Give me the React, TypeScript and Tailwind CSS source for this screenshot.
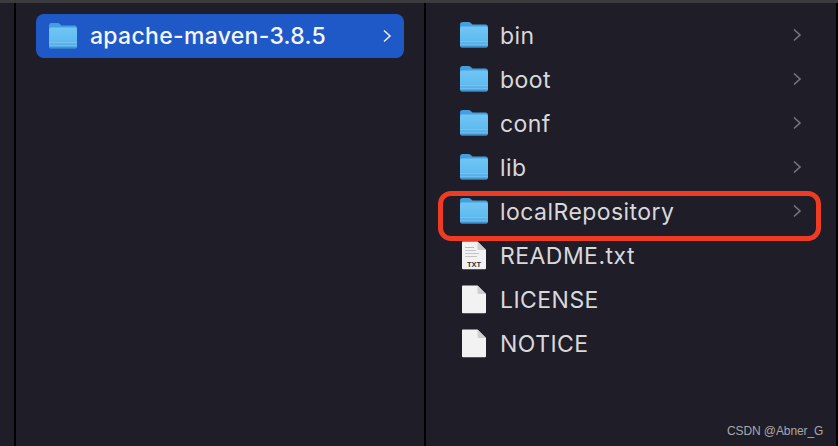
import React from 'react';

const Folder = ({ id }: { id: string }) => (
  <svg width="30" height="28" viewBox="0 0 30 28" className="shrink-0">
    <defs>
      <linearGradient id={id} x1="0" y1="0" x2="0" y2="1">
        <stop offset="0" stopColor="#70c6f5" />
        <stop offset="0.6" stopColor="#62bcf0" />
        <stop offset="1" stopColor="#4fa5e0" />
      </linearGradient>
    </defs>
    <path d="M1 3.500C1 2 2 1 3.500 1h6c1 0 1.600.4 2.300 1l1.700 1.600h13c1.400 0 2.500 1 2.500 2.500v4H1z" fill="#459fdf" />
    <rect x="1" y="5.500" width="28" height="21" rx="2" fill={`url(#${id})`} />
    <rect x="1" y="20" width="28" height="1" fill="#8accf2" opacity="0.6" />
    <rect x="1" y="23" width="28" height="1" fill="#8accf2" opacity="0.5" />
    <rect x="2" y="25.500" width="26" height="1" fill="#2f7fbd" />
  </svg>
);

const FileIcon = ({ txt }: { txt?: boolean }) => (
  <svg width="26" height="29" viewBox="0 0 26 29" className="shrink-0">
    <path d="M1 1.500C1 .9 1.400.5 2 .5h14.500L25 9v18c0 .8-.5 1.300-1.300 1.300H2.300C1.500 28.300 1 27.800 1 27z" fill="#f2f2f2" />
    <path d="M16.500.5V7.500c0 .9.6 1.500 1.500 1.500h7z" fill="#cfcfcf" />
    {txt && (
      <>
        <rect x="4" y="6" width="9" height="1" fill="#bbbbbb" />
        <rect x="4" y="9" width="11" height="1" fill="#c4c4c4" />
        <rect x="4" y="12" width="14" height="1" fill="#c4c4c4" />
        <rect x="4" y="15" width="12" height="1" fill="#c4c4c4" />
        <text x="13" y="26" textAnchor="middle" fontSize="7.500" fontWeight="700" fill="#333333" fontFamily="Liberation Sans, sans-serif">TXT</text>
      </>
    )}
  </svg>
);

const Chevron = ({ color }: { color: string }) => (
  <svg width="10" height="14" viewBox="0 0 10 14" fill="none" stroke={color} strokeWidth="1.600" className="shrink-0">
    <path d="M2 1.500 8 7l-6 5.500" />
  </svg>
);

const rows = [
  { name: 'bin', kind: 'folder' },
  { name: 'boot', kind: 'folder' },
  { name: 'conf', kind: 'folder' },
  { name: 'lib', kind: 'folder' },
  { name: 'localRepository', kind: 'folder' },
  { name: 'README.txt', kind: 'txt' },
  { name: 'LICENSE', kind: 'file' },
  { name: 'NOTICE', kind: 'file' },
];

export default function App() {
  return (
    <div className="relative w-[838px] h-[446px] overflow-hidden bg-[#1f1d27] font-['Inter',sans-serif]">
      <div className="h-[3px] bg-[#3b3a3d]" />
      <div className="flex h-[443px]">
        <div className="w-[14px] shrink-0" />
        <div className="w-[2px] shrink-0 bg-black" />
        <div className="w-[408px] shrink-0 pl-[20px] pr-[20px] pt-[11px]">
          <div className="flex h-[44px] items-center rounded-[8px] bg-[#1f59c8] pl-[12px] pr-[12px]">
            <Folder id="sel" />
            <span className="ml-[12px] flex-1 pt-[1px] text-[23px] font-medium tracking-[0.3px] text-[#f4f6fb]">apache-maven-3.8.5</span>
            <Chevron color="#e6ecfa" />
          </div>
        </div>
        <div className="w-[2px] shrink-0 bg-black" />
        <div className="flex-1 pt-[10px] pl-[33px] pr-[34px]">
          {rows.map((row, i) => (
            <div key={row.name} className="flex h-[44px] items-center">
              <div className="flex w-[41px] shrink-0">
                {row.kind === 'folder' ? (
                  <Folder id={`f${i}`} />
                ) : (
                  <div className="pl-[2px]">
                    <FileIcon txt={row.kind === 'txt'} />
                  </div>
                )}
              </div>
              <span className="flex-1 pt-[2px] text-[23px] tracking-[0.45px] text-[#d9d8dc]">{row.name}</span>
              {row.kind === 'folder' && <Chevron color="#77767c" />}
            </div>
          ))}
        </div>
        <div className="w-[2px] shrink-0 bg-black" />
      </div>
      <div className="absolute left-[438px] top-[191px] h-[50px] w-[383px] rounded-[13px] border-[5px] border-[#ee3c24]" />
      <div className="absolute left-[727px] top-[422px] text-[12px] tracking-[-0.1px] text-[#a9a8ab] font-['Liberation_Sans',sans-serif]">CSDN @Abner_G</div>
    </div>
  );
}
